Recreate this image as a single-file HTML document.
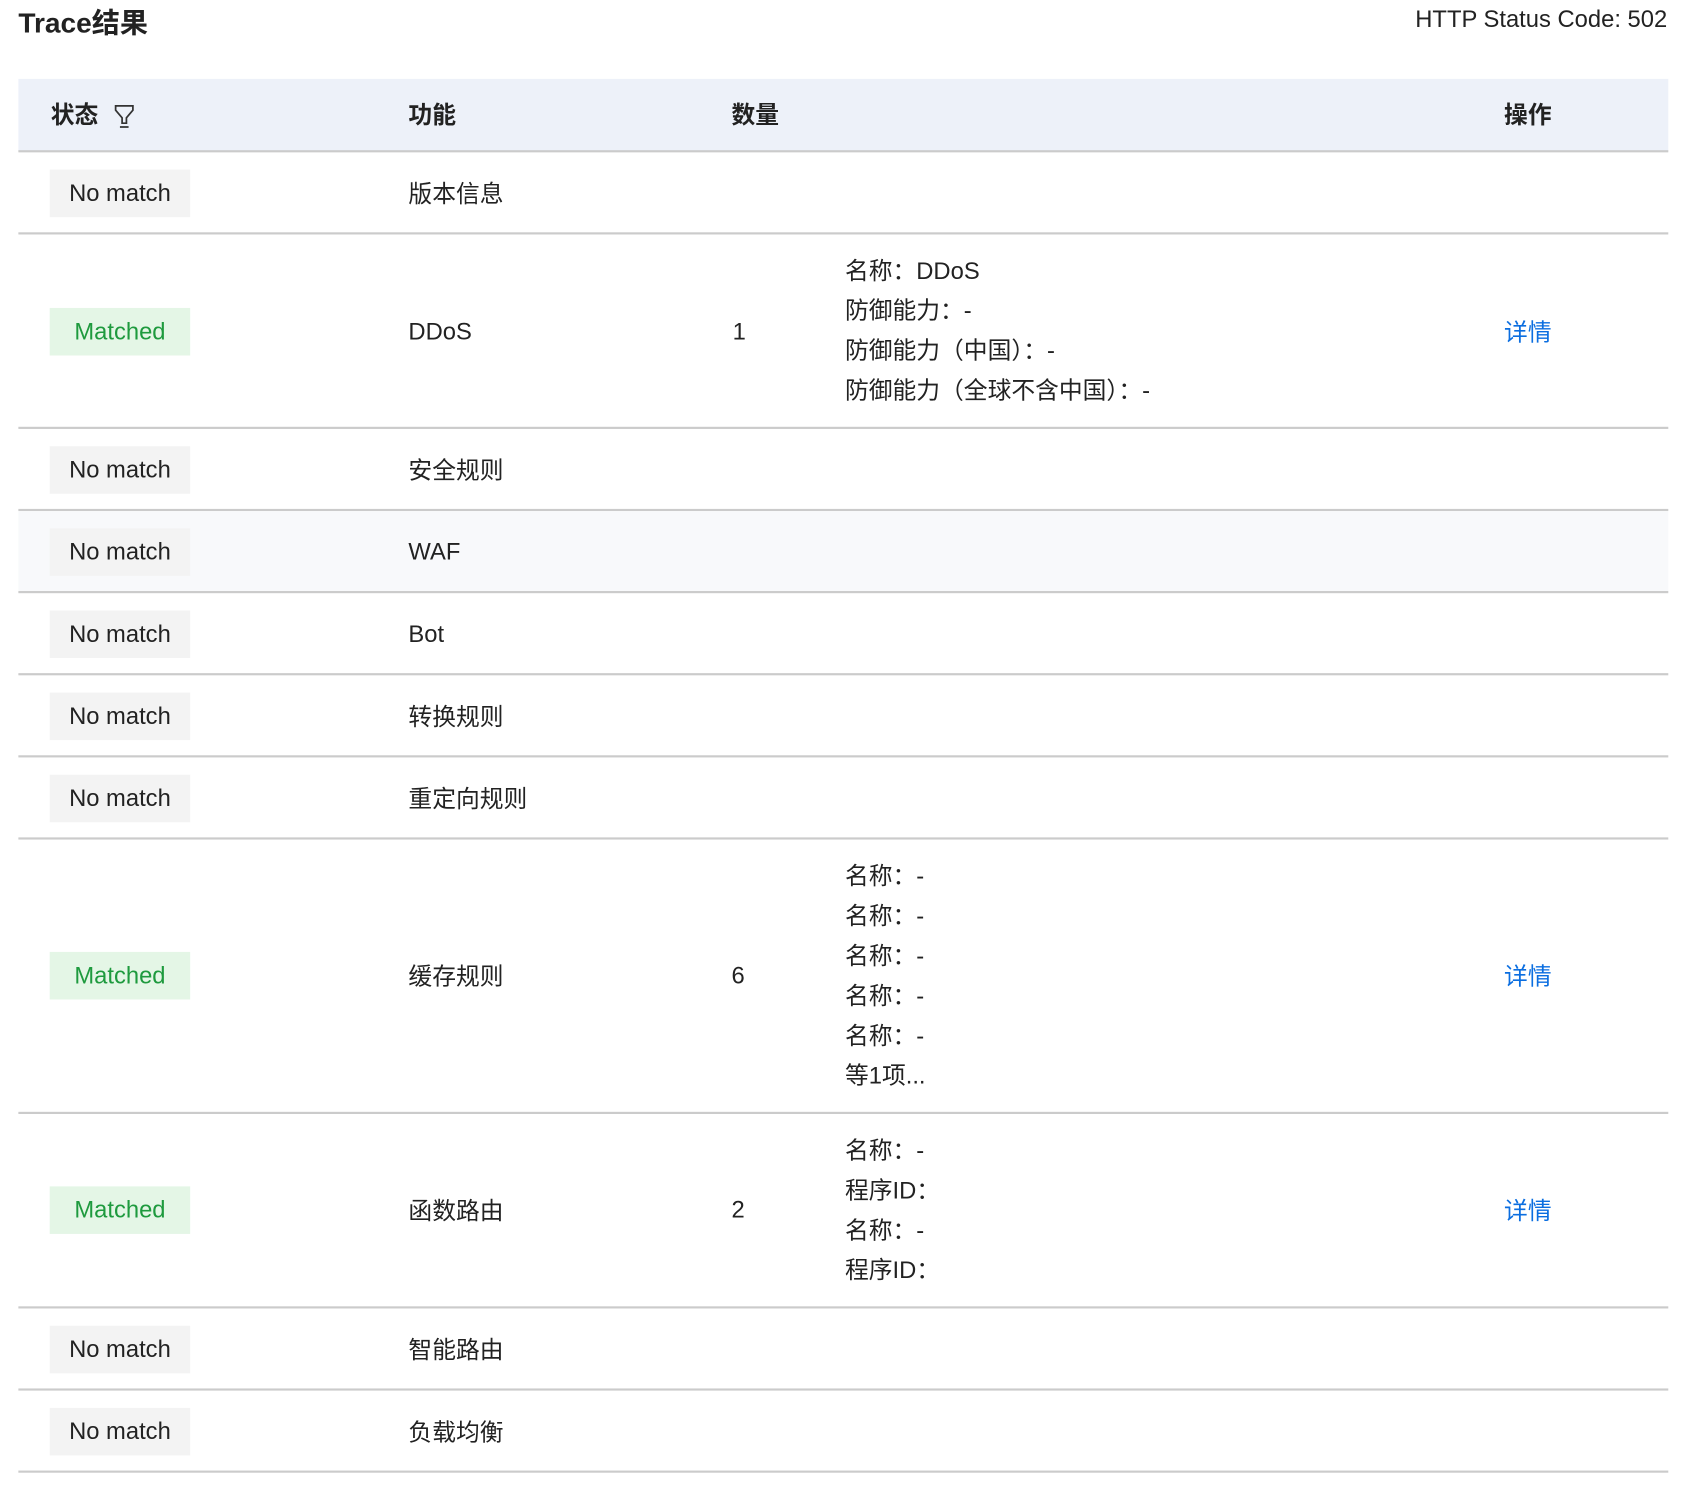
<!DOCTYPE html>
<html><head><meta charset="utf-8"><style>
html,body{margin:0;padding:0;background:#fff;width:1692px;height:1490px;overflow:hidden}
#w{position:absolute;left:0;top:0;width:1565px;height:1378px;transform:scale(1.0805);transform-origin:0 0;font-family:"Liberation Sans","Noto Sans CJK SC",sans-serif;color:#222;font-size:22px}
.a{position:absolute;white-space:nowrap;line-height:26px}
.c{margin-top:0}
.line{position:absolute;left:17px;width:1527px;height:2px;background:#cbcbcb}
.tag{position:absolute;left:46px;width:130px;height:44px;line-height:44px;text-align:center;background:#f3f3f3;color:#222}
.tag.m{background:#e4f6e6;color:#1e9a3e}
.det{position:absolute;left:782px;line-height:37px;font-size:22px;color:#222}
.lk{position:absolute;left:1392px;color:#0b6ee0;line-height:26px}
</style></head><body><div id="w">
<div class="a c" style="left:17px;top:8px;font-size:26px;font-weight:bold">Trace结果</div>
<div class="a" style="right:22px;top:5px;font-size:22px">HTTP Status Code: 502</div>
<div style="position:absolute;left:17px;top:73px;width:1527px;height:67px;background:#edf1f9"></div>
<div class="a c" style="left:47px;top:94px;font-weight:bold">状态</div>
<svg class="a" style="left:105px;top:96px" width="22" height="24" viewBox="0 0 22 24"><path d="M2 2H18V6L12 13V18H8V13L2 6Z" fill="none" stroke="#333" stroke-width="1.6"/><path d="M6 21.5H14" stroke="#333" stroke-width="1.6"/></svg>
<div class="a c" style="left:378px;top:94px;font-weight:bold">功能</div>
<div class="a c" style="left:677px;top:94px;font-weight:bold">数量</div>
<div class="a c" style="left:1392px;top:94px;font-weight:bold">操作</div>
<div class="line" style="top:139px"></div>

<div class="tag" style="top:157px">No match</div><div class="a c" style="left:378px;top:167px">版本信息</div>
<div class="line" style="top:215px"></div>

<div class="tag m" style="top:285px">Matched</div><div class="a" style="left:378px;top:294px">DDoS</div><div class="a" style="left:678px;top:294px">1</div>
<div class="det" style="top:232px">名称：DDoS<br>防御能力：-<br>防御能力（中国）：-<br>防御能力（全球不含中国）：-</div>
<div class="lk" style="top:295px">详情</div>
<div class="line" style="top:395px"></div>

<div class="tag" style="top:413px">No match</div><div class="a c" style="left:378px;top:423px">安全规则</div>
<div class="line" style="top:471px"></div>
<div style="position:absolute;left:17px;top:473px;width:1527px;height:74px;background:#f8f9fb"></div>
<div class="tag" style="top:489px">No match</div><div class="a" style="left:378px;top:498px">WAF</div>
<div class="line" style="top:547px"></div>
<div class="tag" style="top:565px">No match</div><div class="a" style="left:378px;top:574px">Bot</div>
<div class="line" style="top:623px"></div>
<div class="tag" style="top:641px">No match</div><div class="a c" style="left:378px;top:651px">转换规则</div>
<div class="line" style="top:699px"></div>
<div class="tag" style="top:717px">No match</div><div class="a c" style="left:378px;top:727px">重定向规则</div>
<div class="line" style="top:775px"></div>

<div class="tag m" style="top:881px">Matched</div><div class="a c" style="left:378px;top:891px">缓存规则</div><div class="a" style="left:677px;top:890px">6</div>
<div class="det" style="top:792px">名称：-<br>名称：-<br>名称：-<br>名称：-<br>名称：-<br>等1项...</div>
<div class="lk" style="top:891px">详情</div>
<div class="line" style="top:1029px"></div>

<div class="tag m" style="top:1098px">Matched</div><div class="a c" style="left:378px;top:1108px">函数路由</div><div class="a" style="left:677px;top:1107px">2</div>
<div class="det" style="top:1046px">名称：-<br>程序ID：<br>名称：-<br>程序ID：</div>
<div class="lk" style="top:1108px">详情</div>
<div class="line" style="top:1209px"></div>

<div class="tag" style="top:1227px">No match</div><div class="a c" style="left:378px;top:1237px">智能路由</div>
<div class="line" style="top:1285px"></div>
<div class="tag" style="top:1303px">No match</div><div class="a c" style="left:378px;top:1313px">负载均衡</div>
<div class="line" style="top:1361px"></div>
</div></body></html>
